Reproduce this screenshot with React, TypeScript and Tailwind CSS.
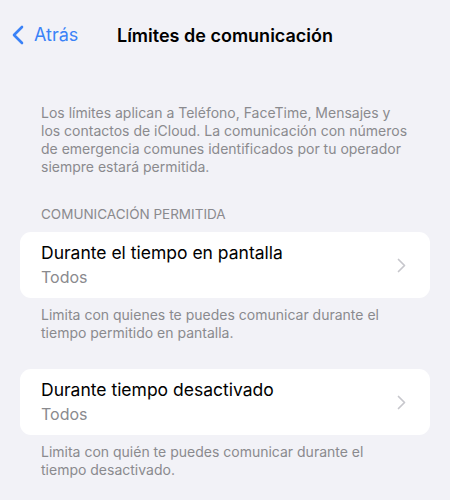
const font = { fontFamily: "Inter, 'Noto Sans', sans-serif" };

function Chevron() {
  return (
    <svg width="9" height="15" viewBox="0 0 9 15" fill="none" className="shrink-0">
      <path d="M1.5 1.5 L7.5 7.5 L1.5 13.5" stroke="#c7c7cc" strokeWidth="1.7" strokeLinecap="round" strokeLinejoin="round" />
    </svg>
  );
}

function Row({ title, value }: { title: string; value: string }) {
  return (
    <div className="mx-[20px] h-[66px] rounded-[11px] bg-white flex items-center pl-[21px] pr-[24px]">
      <div className="flex-1 flex flex-col">
        <span className="text-[17.5px] leading-[22px] text-black">{title}</span>
        <span className="text-[16px] leading-[22px] text-[#8a8a8e] mt-[2px]">{value}</span>
      </div>
      <Chevron />
    </div>
  );
}

export default function App() {
  return (
    <div className="w-[450px] h-[500px] bg-[#f2f2f7] overflow-hidden" style={font}>
      {/* Nav bar */}
      <div className="relative h-[70px] flex items-center">
        <div className="absolute left-[12px] top-[25px] flex items-center gap-[10px]">
          <svg width="12" height="20" viewBox="0 0 12 20" fill="none">
            <path d="M10 2 L2 10 L10 18" stroke="#3a82f7" strokeWidth="2.6" strokeLinecap="round" strokeLinejoin="round" />
          </svg>
          <span className="text-[18px] leading-[20px] text-[#3a82f7]">Atrás</span>
        </div>
        <div className="absolute left-0 right-0 top-[24px] text-center">
          <span className="text-[18px] leading-[22px] font-semibold text-black">Límites de comunicación</span>
        </div>
      </div>

      {/* Description */}
      <p className="px-[41px] mt-[34px] text-[14px] leading-[18px] text-[#8a8a8e] whitespace-nowrap">
        Los límites aplican a Teléfono, FaceTime, Mensajes y<br />
        los contactos de iCloud. La comunicación con números<br />
        de emergencia comunes identificados por tu operador<br />
        siempre estará permitida.
      </p>

      <p className="px-[41px] mt-[30px] text-[13.5px] leading-[16px] text-[#8a8a8e] uppercase">
        Comunicación permitida
      </p>

      <div className="mt-[10px]">
        <Row title="Durante el tiempo en pantalla" value="Todos" />
      </div>
      <p className="px-[41px] mt-[8px] text-[14px] leading-[18px] text-[#8a8a8e] whitespace-nowrap">
        Limita con quienes te puedes comunicar durante el<br />
        tiempo permitido en pantalla.
      </p>

      <div className="mt-[27px]">
        <Row title="Durante tiempo desactivado" value="Todos" />
      </div>
      <p className="px-[41px] mt-[8px] text-[14px] leading-[18px] text-[#8a8a8e] whitespace-nowrap">
        Limita con quién te puedes comunicar durante el<br />
        tiempo desactivado.
      </p>
    </div>
  );
}
